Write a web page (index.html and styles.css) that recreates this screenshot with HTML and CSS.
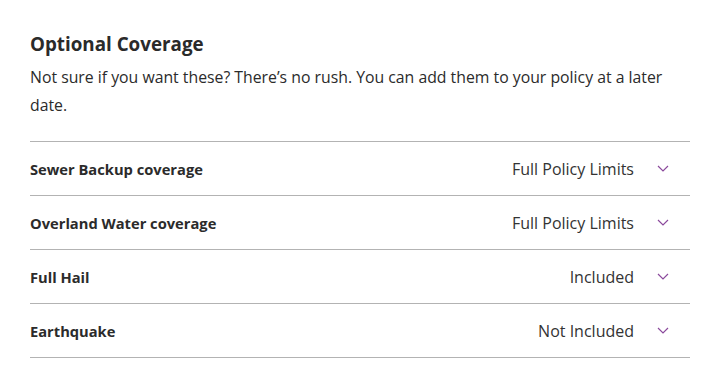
FILE: index.html
```html
<!DOCTYPE html>
<html>
<head>
    <title>Optional Coverage</title>
    <link rel="stylesheet" href="styles.css">
</head>
<body>
    <div class="coverage">
        <h2>Optional Coverage</h2>
        <p class="intro">Not sure if you want these? There’s no rush. You can add them to your policy at a later date.</p>

        <div class="row">
            <span class="name">Sewer Backup coverage</span>
            <span class="value">Full Policy Limits</span>
            <svg class="chev" width="12" height="7" viewBox="0 0 12 7"><path d="M1 1l5 5 5-5" fill="none" stroke="#8b4a9c" stroke-width="1.2"/></svg>
        </div>
        <div class="row">
            <span class="name">Overland Water coverage</span>
            <span class="value">Full Policy Limits</span>
            <svg class="chev" width="12" height="7" viewBox="0 0 12 7"><path d="M1 1l5 5 5-5" fill="none" stroke="#8b4a9c" stroke-width="1.2"/></svg>
        </div>
        <div class="row">
            <span class="name">Full Hail</span>
            <span class="value">Included</span>
            <svg class="chev" width="12" height="7" viewBox="0 0 12 7"><path d="M1 1l5 5 5-5" fill="none" stroke="#8b4a9c" stroke-width="1.2"/></svg>
        </div>
        <div class="row">
            <span class="name">Earthquake</span>
            <span class="value">Not Included</span>
            <svg class="chev" width="12" height="7" viewBox="0 0 12 7"><path d="M1 1l5 5 5-5" fill="none" stroke="#8b4a9c" stroke-width="1.2"/></svg>
        </div>
    </div>
</body>
</html>
```

FILE: styles.css
```css
body {
    margin: 0;
    background: #ffffff;
    font-family: "Open Sans", "Liberation Sans", sans-serif;
    color: #2b2b2b;
}
.coverage {
    width: 660px;
    padding: 30px 0 0 30px;
}
h2 {
    margin: 0;
    font-size: 18.8px;
    line-height: 28px;
    font-weight: 700;
    color: #2a2a2a;
}
.intro {
    margin: 5px 0 22px;
    font-size: 15.8px;
    line-height: 28px;
}
.row {
    display: flex;
    align-items: center;
    height: 53px;
    border-top: 1px solid #b3b3b3;
    font-size: 16px;
}
.row:last-child {
    border-bottom: 1px solid #b3b3b3;
}
.name {
    flex: 1;
    font-size: 14.7px;
    font-weight: 700;
}
.value {
    color: #333333;
}
.chev {
    margin: 0 21px 0 23px;
}
```
